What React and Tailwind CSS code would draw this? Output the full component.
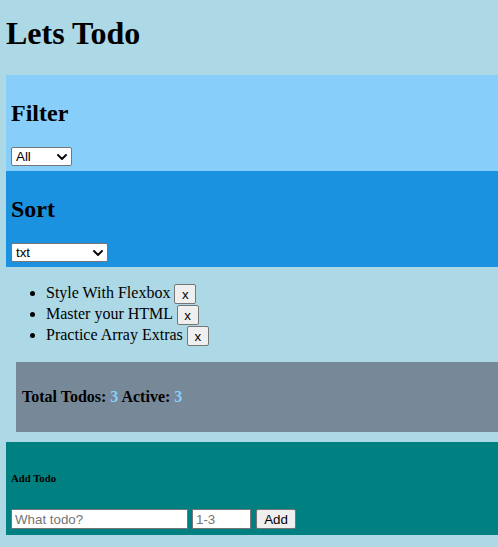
import React, { useState } from 'react';

// Small chevron drawn over the native select, since preflight strips the arrow.
const Chevron = () => (
    <svg
        className="pointer-events-none absolute right-[5px] top-1/2 -translate-y-1/2"
        width="10"
        height="6"
        viewBox="0 0 10 6"
        fill="none"
    >
        <path d="M1 1l4 4 4-4" stroke="#000" strokeWidth="1.8" strokeLinecap="round" strokeLinejoin="round" />
    </svg>
);

const Dropdown = ({ width, value, options, onChange }) => (
    <div className={`relative ${width}`}>
        <select
            value={value}
            onChange={(e) => onChange(e.target.value)}
            className="block w-full h-[19px] appearance-none bg-white border border-[#767676] rounded-[2px] pl-[4px] text-[13.33px] leading-[17px] text-black font-['Liberation_Sans',Arial,sans-serif] outline-none"
        >
            {options.map((o) => (
                <option key={o} value={o}>{o}</option>
            ))}
        </select>
        <Chevron />
    </div>
);

const todosSeed = [
    { id: 1, txt: 'Style With Flexbox', done: false },
    { id: 2, txt: 'Master your HTML', done: false },
    { id: 3, txt: 'Practice Array Extras', done: false },
];

export default function App() {
    const [todos, setTodos] = useState(todosSeed);
    const [filter, setFilter] = useState('All');
    const [sort, setSort] = useState('txt');

    const active = todos.filter((t) => !t.done).length;

    return (
        <div className="min-h-screen overflow-hidden bg-[#add8e6] pt-[15px] pb-[12px] text-black font-['Liberation_Serif','Times_New_Roman',serif]">
            <h1 className="pl-[6px] text-[32px] leading-[37px] font-bold">Lets Todo</h1>

            {/* Filter */}
            <section className="mt-[23px] ml-[6px] h-[96px] bg-[#87cefa] px-[5px] pt-[24px]">
                <h2 className="text-[24px] leading-[28px] font-bold">Filter</h2>
                <div className="mt-[20px] flex">
                    <Dropdown width="w-[61px]" value={filter} options={['All', 'Active', 'Done']} onChange={setFilter} />
                </div>
            </section>

            {/* Sort */}
            <section className="ml-[6px] h-[96px] bg-[#1b92e0] px-[5px] pt-[24px]">
                <h2 className="text-[24px] leading-[28px] font-bold">Sort</h2>
                <div className="mt-[20px] flex">
                    <Dropdown width="w-[97px]" value={sort} options={['txt', 'priority']} onChange={setSort} />
                </div>
            </section>

            <ul className="mt-[16px] list-disc pl-[46px] text-[16px]">
                {todos.map((t) => (
                    <li key={t.id} className="h-[21px] leading-[20px]">
                        {t.txt}{' '}
                        <button
                            onClick={() => setTodos(todos.filter((x) => x.id !== t.id))}
                            className="inline-block h-[20px] w-[22px] align-middle bg-[#efefef] border border-[#767676] rounded-[2px] text-[13.33px] leading-[17px] font-['Liberation_Sans',Arial,sans-serif]"
                        >
                            x
                        </button>
                    </li>
                ))}
            </ul>

            {/* Stats */}
            <section className="mt-[16px] ml-[16px] flex h-[70px] items-center bg-[#778899] pl-[6px]">
                <h4 className="text-[16px] leading-[18px] font-bold">
                    Total Todos: <span className="text-[#87cefa]">{todos.length}</span> Active:{' '}
                    <span className="text-[#87cefa]">{active}</span>
                </h4>
            </section>

            {/* Add */}
            <section className="mt-[10px] ml-[6px] h-[93px] bg-[#008080] px-[5px] pt-[30px]">
                <h6 className="text-[10.72px] leading-[12px] font-bold">Add Todo</h6>
                <div className="mt-[25px] flex items-center font-['Liberation_Sans',Arial,sans-serif] text-[13.33px]">
                    <input
                        type="text"
                        placeholder="What todo?"
                        className="h-[20px] w-[177px] bg-white border border-[#767676] px-[3px] placeholder:text-[#757575] outline-none"
                    />
                    <input
                        type="text"
                        placeholder="1-3"
                        className="ml-[4px] h-[20px] w-[59px] bg-white border border-[#767676] px-[3px] placeholder:text-[#757575] outline-none"
                    />
                    <button className="ml-[5px] h-[20px] w-[40px] bg-[#efefef] border border-[#767676] rounded-[2px] leading-[17px]">
                        Add
                    </button>
                </div>
            </section>
        </div>
    );
}
